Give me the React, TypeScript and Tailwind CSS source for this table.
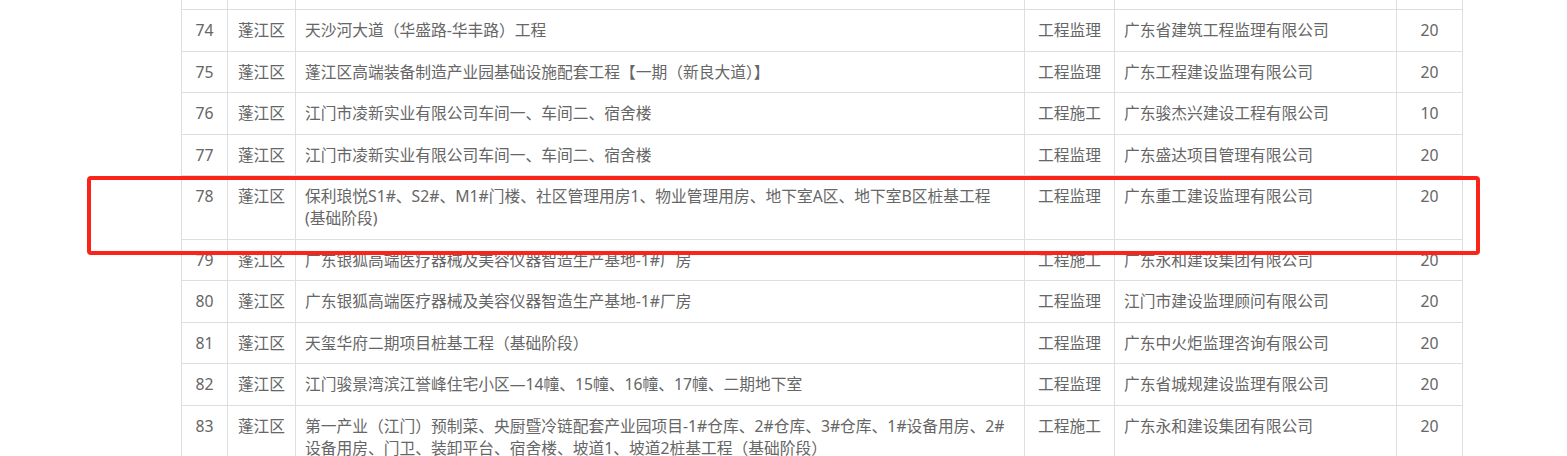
import React from 'react'

type Row = {
  no: string
  district: string
  name: string[]
  kind: string
  company: string
  score: string
}

const rows: Row[] = [
  { no: '74', district: '蓬江区', name: ['天沙河大道（华盛路-华丰路）工程'], kind: '工程监理', company: '广东省建筑工程监理有限公司', score: '20' },
  { no: '75', district: '蓬江区', name: ['蓬江区高端装备制造产业园基础设施配套工程【一期（新良大道）】'], kind: '工程监理', company: '广东工程建设监理有限公司', score: '20' },
  { no: '76', district: '蓬江区', name: ['江门市凌新实业有限公司车间一、车间二、宿舍楼'], kind: '工程施工', company: '广东骏杰兴建设工程有限公司', score: '10' },
  { no: '77', district: '蓬江区', name: ['江门市凌新实业有限公司车间一、车间二、宿舍楼'], kind: '工程监理', company: '广东盛达项目管理有限公司', score: '20' },
  {
    no: '78',
    district: '蓬江区',
    name: ['保利琅悦S1#、S2#、M1#门楼、社区管理用房1、物业管理用房、地下室A区、地下室B区桩基工程', '(基础阶段)'],
    kind: '工程监理',
    company: '广东重工建设监理有限公司',
    score: '20',
  },
  { no: '79', district: '蓬江区', name: ['广东银狐高端医疗器械及美容仪器智造生产基地-1#厂房'], kind: '工程施工', company: '广东永和建设集团有限公司', score: '20' },
  { no: '80', district: '蓬江区', name: ['广东银狐高端医疗器械及美容仪器智造生产基地-1#厂房'], kind: '工程监理', company: '江门市建设监理顾问有限公司', score: '20' },
  { no: '81', district: '蓬江区', name: ['天玺华府二期项目桩基工程（基础阶段）'], kind: '工程监理', company: '广东中火炬监理咨询有限公司', score: '20' },
  { no: '82', district: '蓬江区', name: ['江门骏景湾滨江誉峰住宅小区—14幢、15幢、16幢、17幢、二期地下室'], kind: '工程监理', company: '广东省城规建设监理有限公司', score: '20' },
  {
    no: '83',
    district: '蓬江区',
    name: ['第一产业（江门）预制菜、央厨暨冷链配套产业园项目-1#仓库、2#仓库、3#仓库、1#设备用房、2#', '设备用房、门卫、装卸平台、宿舍楼、坡道1、坡道2桩基工程（基础阶段）'],
    kind: '工程施工',
    company: '广东永和建设集团有限公司',
    score: '20',
  },
]

const cell = 'border-r border-b border-[#dedede] py-[9.25px] leading-[22px] whitespace-nowrap'

export default function App() {
  return (
    <div
      className="relative h-[456px] w-full overflow-hidden bg-white text-[15.75px] text-[#666]"
      style={{ fontFamily: '"Noto Sans", "Noto Sans CJK SC", sans-serif' }}
    >
      <div className="ml-[181px] grid w-[1282px] grid-cols-[46px_68px_729px_90px_282px_66px] border-l border-[#dedede]">
        {/* partial row cut off at the top */}
        {[0, 1, 2, 3, 4, 5].map((i) => (
          <div key={i} className="h-[10px] border-r border-b border-[#dedede]" />
        ))}
        {rows.map((r) => (
          <React.Fragment key={r.no}>
            <div className={`${cell} text-center`}>{r.no}</div>
            <div className={`${cell} text-center`}>{r.district}</div>
            <div className={`${cell} px-[9px]`}>
              {r.name.map((line, i) => (
                <div key={i}>{line}</div>
              ))}
            </div>
            <div className={`${cell} text-center`}>{r.kind}</div>
            <div className={`${cell} px-[9px]`}>{r.company}</div>
            <div className={`${cell} text-center`}>{r.score}</div>
          </React.Fragment>
        ))}
      </div>

      {/* highlight box around row 78 */}
      <div className="pointer-events-none absolute left-[87px] top-[176px] h-[79px] w-[1393px] rounded-[4px] border-4 border-[#fa2419]" />
    </div>
  )
}
